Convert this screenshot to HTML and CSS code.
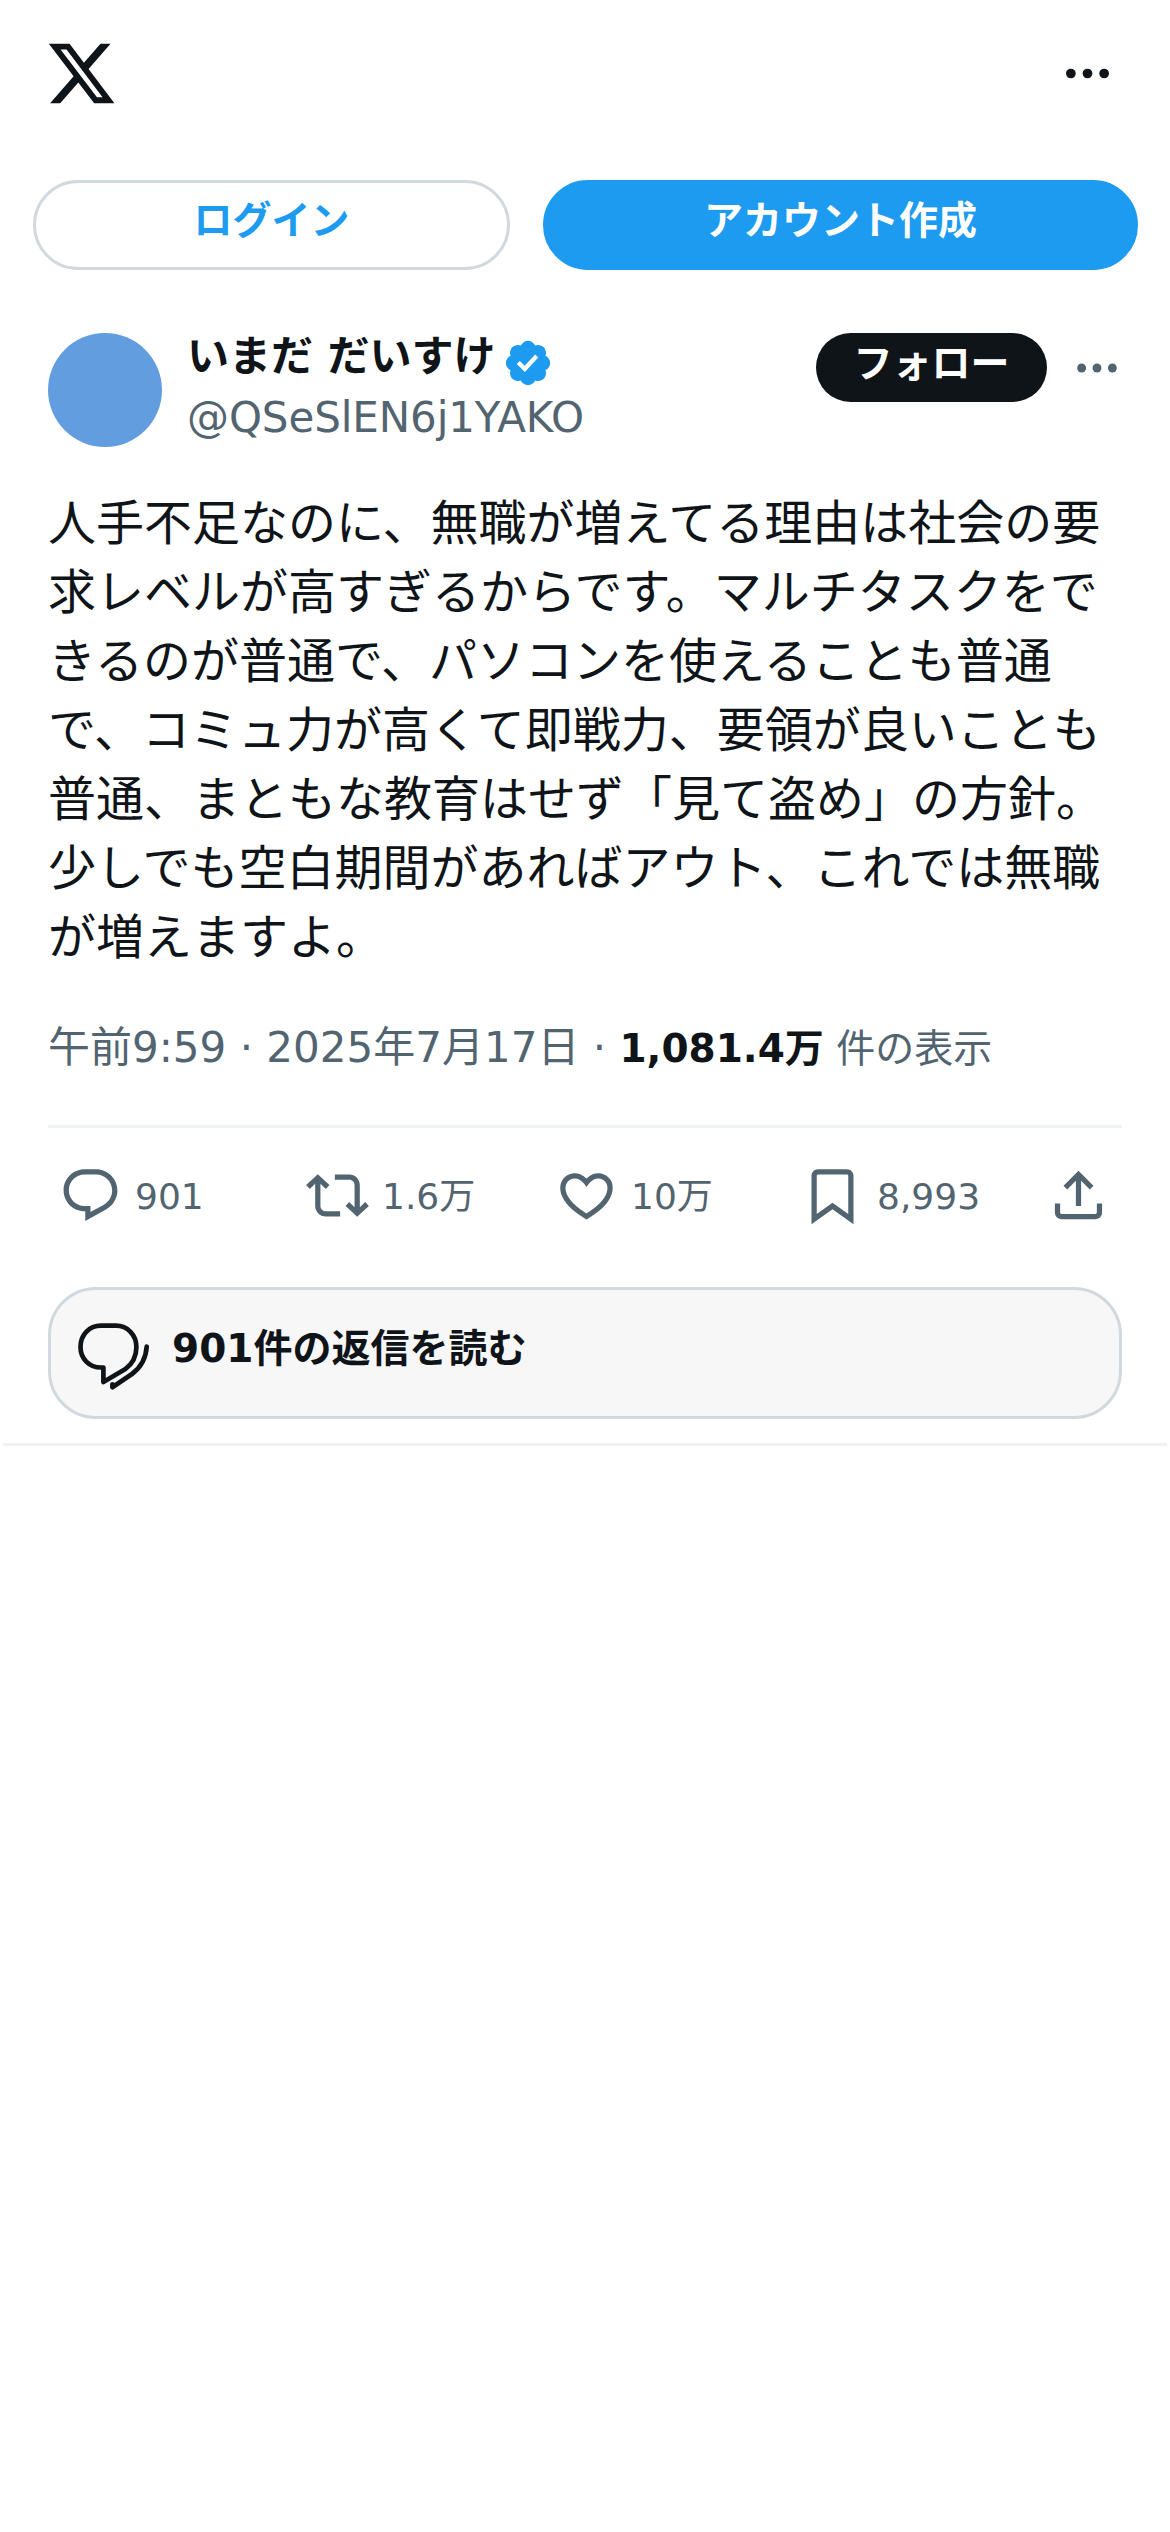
FILE: index.html
```html
<!DOCTYPE html>
<html lang="ja">
<head>
<meta charset="utf-8">
<title>X</title>
<link rel="stylesheet" href="styles.css">
</head>
<body>
<header class="topbar">
  <svg class="logo" viewBox="0 0 24 24"><path d="M18.244 2.25h3.308l-7.227 8.26 8.502 11.24H16.17l-5.214-6.817L4.99 21.75H1.68l7.73-8.835L1.254 2.25H8.08l4.713 6.231zm-1.161 17.52h1.833L7.084 4.126H5.117z"/></svg>
  <svg class="more" viewBox="0 0 24 24"><circle cx="5" cy="12" r="2.05"/><circle cx="12" cy="12" r="2.05"/><circle cx="19" cy="12" r="2.05"/></svg>
</header>
<nav class="auth">
  <a class="btn login">ログイン</a>
  <a class="btn signup">アカウント作成</a>
</nav>
<article class="post">
  <div class="author">
    <div class="avatar"></div>
    <div class="names">
      <div class="name"><span>いまだ だいすけ</span><svg class="badge" viewBox="0 0 22 22"><path d="M20.396 11c-.018-.646-.215-1.275-.57-1.816-.354-.54-.852-.972-1.438-1.246.223-.607.27-1.264.14-1.897-.131-.634-.437-1.218-.882-1.687-.47-.445-1.053-.75-1.687-.882-.633-.13-1.29-.083-1.897.14-.273-.587-.704-1.086-1.245-1.44S11.647 1.62 11 1.604c-.646.017-1.273.213-1.813.568s-.969.854-1.24 1.44c-.608-.223-1.267-.272-1.902-.14-.635.13-1.22.436-1.69.882-.445.47-.749 1.055-.878 1.688-.13.633-.08 1.29.144 1.896-.587.274-1.087.705-1.443 1.245-.356.54-.555 1.17-.574 1.817.02.647.218 1.276.574 1.817.356.54.856.972 1.443 1.245-.224.606-.274 1.263-.144 1.896.13.634.433 1.218.877 1.688.47.443 1.054.747 1.687.878.633.132 1.29.084 1.897-.136.274.586.705 1.084 1.246 1.439.54.354 1.17.551 1.816.569.647-.016 1.276-.213 1.817-.567s.972-.854 1.245-1.44c.604.239 1.266.296 1.903.164.636-.132 1.22-.447 1.68-.907.46-.46.776-1.044.908-1.681s.075-1.299-.165-1.903c.586-.274 1.084-.705 1.439-1.246.354-.54.551-1.17.569-1.816zM9.662 14.85l-3.429-3.428 1.293-1.302 2.072 2.072 4.4-4.794 1.347 1.246z"/></svg></div>
      <div class="handle">@QSeSlEN6j1YAKO</div>
    </div>
    <a class="follow">フォロー</a>
    <svg class="post-more" viewBox="0 0 24 24"><circle cx="4.9" cy="12" r="2.05"/><circle cx="12" cy="12" r="2.05"/><circle cx="19.1" cy="12" r="2.05"/></svg>
  </div>
  <p class="text">人手不足なのに、無職が増えてる理由は社会の要求レベルが高すぎるからです。マルチタスクをできるのが普通で、パソコンを使えることも普通で、コミュ力が高くて即戦力、要領が良いことも普通、まともな教育はせず「見て盗め」の方針。少しでも空白期間があればアウト、これでは無職が増えますよ。</p>
  <div class="meta">午前9:59 · 2025年7月17日 · <span class="views"><b>1,081.4万</b> 件の表示</span></div>
  <div class="actions">
    <div class="action"><svg viewBox="0 0 24 24"><path d="M1.751 10c0-4.42 3.584-8 8.005-8h4.366c4.49 0 8.129 3.64 8.129 8.13 0 2.96-1.607 5.68-4.196 7.11l-8.054 4.46v-3.69h-.067c-4.49.1-8.183-3.51-8.183-8.01zm8.005-6c-3.317 0-6.005 2.69-6.005 6 0 3.37 2.77 6.08 6.138 6.01l.351-.01h1.761v2.3l5.087-2.81c1.951-1.08 3.163-3.13 3.163-5.36 0-3.39-2.744-6.13-6.129-6.13H9.756z"/></svg><span>901</span></div>
    <div class="action"><svg viewBox="0 0 24 24"><path d="M4.5 3.88l4.432 4.14-1.364 1.46L5.5 7.55V16c0 1.1.896 2 2 2H13v2H7.5c-2.209 0-4-1.79-4-4V7.55L1.432 9.48.068 8.02 4.5 3.88zM16.5 6H11V4h5.5c2.209 0 4 1.79 4 4v8.45l2.068-1.93 1.364 1.46-4.432 4.14-4.432-4.14 1.364-1.46 2.068 1.93V8c0-1.1-.896-2-2-2z"/></svg><span>1.6万</span></div>
    <div class="action"><svg viewBox="0 0 24 24"><path d="M16.697 5.5c-1.222-.06-2.679.51-3.89 2.16l-.805 1.09-.806-1.09C9.984 6.01 8.526 5.44 7.304 5.5c-1.243.07-2.349.78-2.91 1.91-.552 1.12-.633 2.78.479 4.82 1.074 1.97 3.257 4.27 7.129 6.61 3.87-2.34 6.052-4.64 7.126-6.61 1.111-2.04 1.03-3.7.477-4.82-.561-1.13-1.666-1.84-2.908-1.91zm4.187 7.69c-1.351 2.48-4.001 5.12-8.379 7.67l-.503.3-.504-.3c-4.379-2.55-7.029-5.19-8.382-7.67-1.36-2.5-1.41-4.86-.514-6.67.887-1.79 2.647-2.91 4.601-3.01 1.651-.09 3.368.56 4.798 2.01 1.429-1.45 3.146-2.1 4.796-2.01 1.954.1 3.714 1.22 4.601 3.01.896 1.81.846 4.17-.514 6.67z"/></svg><span>10万</span></div>
    <div class="action"><svg viewBox="0 0 24 24"><path d="M4 4.5C4 3.12 5.119 2 6.5 2h11C18.881 2 20 3.12 20 4.5v18.44l-8-5.71-8 5.71V4.5zM6.5 4c-.276 0-.5.22-.5.5v14.56l6-4.29 6 4.29V4.5c0-.28-.224-.5-.5-.5h-11z"/></svg><span>8,993</span></div>
    <div class="action"><svg viewBox="0 0 24 24"><path d="M12 2.59l5.7 5.7-1.41 1.42L13 6.41V16h-2V6.41l-3.3 3.3-1.41-1.42L12 2.59zM21 15l-.02 3.51c0 1.38-1.12 2.49-2.5 2.49H5.5C4.11 21 3 19.88 3 18.5V15h2v3.5c0 .28.22.5.5.5h12.98c.28 0 .5-.22.5-.5L19 15h2z"/></svg></div>
  </div>
  <a class="replies">
    <svg viewBox="0 0 72 72"><path d="M25 8.700H40C51.500 8.700 60.400 18 60.400 30C60.400 38.500 56.500 47 49 52.300L27.400 65V50.500H25C13 50.500 4.500 41.500 4.500 30C4.500 18 13 8.700 25 8.700Z"/><path d="M70.700 29.700C70 41 65.500 50 56 57L36.400 70.300V67.300"/></svg>
    <span>901件の返信を読む</span>
  </a>
</article>
</body>
</html>
```
FILE: styles.css
```css
* { box-sizing: border-box; }
body {
  margin: 0;
  background: #fff;
  color: #0f1419;
  font-family: "DejaVu Sans", "Noto Sans CJK JP", sans-serif;
}
svg { display: block; flex: none; overflow: visible; }
.topbar {
  display: flex;
  justify-content: space-between;
  align-items: center;
  height: 180px;
  padding: 0 54px 33px 45px;
}
.logo { width: 73px; height: 73px; fill: #0f1419; }
.more { width: 57px; height: 57px; fill: #0f1419; }
.auth {
  display: flex;
  gap: 33px;
  padding: 0 32px 0 33px;
}
.btn {
  height: 90px;
  border-radius: 45px;
  font-size: 39px;
  font-weight: 700;
  line-height: 76px;
  text-align: center;
}
.login { width: 477px; border: 3px solid #cfd9de; color: #1d9bf0; }
.signup { flex: 1; border: 3px solid #1d9bf0; background: #1d9bf0; color: #fff; }
.post {
  margin: 0 3px;
  padding: 63px 45px 24px;
  border-bottom: 3px solid #eff1f2;
}
.author { display: flex; align-items: flex-start; height: 156px; }
.avatar { width: 114px; height: 114px; border-radius: 50%; background: #629edf; }
.names { flex: 1; padding-left: 25px; }
.name {
  display: flex;
  align-items: center;
  gap: 6px;
  height: 54px;
  font-size: 42px;
  font-weight: 700;
  line-height: 48px;
}
.name span { height: 54px; }
.badge { width: 52px; height: 52px; fill: #1d9bf0; margin-top: 5px; }
.handle { color: #536471; font-size: 42px; line-height: 62px; letter-spacing: -0.1px; }
.follow {
  width: 231px;
  height: 69px;
  border-radius: 35px;
  background: #0f1419;
  color: #fff;
  font-size: 39px;
  font-weight: 700;
  line-height: 62px;
  text-align: center;
}
.post-more { width: 52px; height: 52px; margin: 9px -1px 0 24px; fill: #536471; }
.text { margin: 0; font-size: 48px; line-height: 69px; }
.meta { margin-top: 44px; height: 109px; color: #536471; font-size: 42px; line-height: 63px; }
.views { font-size: 39px; }
.views b { color: #0f1419; }
.actions {
  display: grid;
  grid-template-columns: 247px 249px 246px 246px 63px;
  align-items: center;
  height: 162px;
  padding: 0 0 24px 11px;
  border-top: 3px solid #eff3f4;
}
.action {
  display: flex;
  align-items: center;
  gap: 13px;
  color: #536471;
  font-size: 36px;
  line-height: 48px;
}
.action span { padding-top: 2px; }
.action svg { width: 63px; height: 63px; fill: #536471; }
.replies {
  display: flex;
  align-items: center;
  gap: 24px;
  height: 132px;
  padding: 0 25px;
  border: 3px solid #cfd9de;
  border-radius: 48px;
  background: #f7f7f7;
  font-size: 39px;
  font-weight: 700;
  line-height: 48px;
}
.replies svg { width: 72px; height: 72px; fill: none; stroke: #0f1419; stroke-width: 4.700; stroke-linejoin: round; stroke-linecap: round; }
.replies span { padding-bottom: 9px; }
```
